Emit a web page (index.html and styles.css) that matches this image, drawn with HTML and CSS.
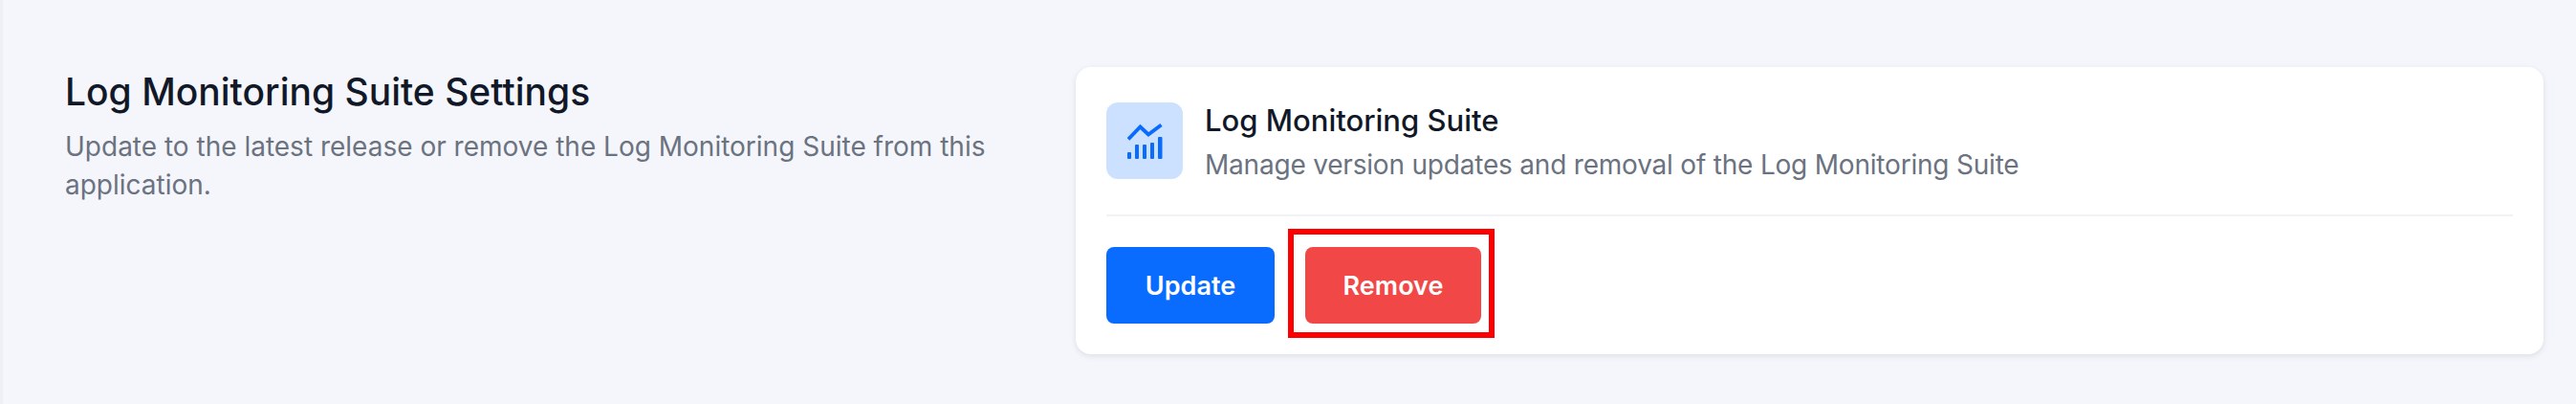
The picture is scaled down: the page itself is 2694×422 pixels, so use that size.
FILE: index.html
```html
<!DOCTYPE html>
<html lang="en">
<head>
  <meta charset="UTF-8" />
  <title>Log Monitoring Suite Settings</title>
  <link rel="stylesheet" href="styles.css">
</head>
<body>
  <div class="page">
    <div class="intro">
      <h2>Log Monitoring Suite Settings</h2>
      <p>Update to the latest release or remove the Log Monitoring Suite from this application.</p>
    </div>

    <div class="card">
      <div class="card-head">
        <div class="icon-box">
          <svg width="37" height="37" viewBox="0 0 37 37" fill="none">
            <path d="M1 16.5 L13.5 3.5 L22 11.5 L35.5 1.5" stroke="#0a6cff" stroke-width="3.8"/>
            <g fill="#0a6cff">
              <rect x="0" y="30" width="4" height="7" rx="1"/>
              <rect x="8" y="22" width="4" height="15" rx="1"/>
              <rect x="16" y="22" width="4" height="15" rx="1"/>
              <rect x="24" y="20" width="4" height="17" rx="1"/>
              <rect x="32" y="14" width="4.5" height="23" rx="1"/>
            </g>
          </svg>
        </div>
        <div class="card-text">
          <h3>Log Monitoring Suite</h3>
          <p>Manage version updates and removal of the Log Monitoring Suite</p>
        </div>
      </div>
      <div class="row">
        <button class="update">Update</button>
        <div class="marked">
          <button class="remove">Remove</button>
        </div>
      </div>
    </div>
  </div>
</body>
</html>
```

FILE: styles.css
```css
html, body { margin: 0; height: 100%; }
body { font-family: Inter, "Open Sans", sans-serif; background: #f5f6fb; }
.page { display: flex; height: 422px; box-sizing: border-box; padding: 70px 34px 52px 65px; border-left: 3px solid #eef0f5; }
.intro { width: 1057px; flex: none; box-sizing: border-box; padding: 2px 60px 0 0; }
.intro h2 { margin: 0; font-size: 39px; line-height: 48px; font-weight: 500; color: #111827; }
.intro p { margin: 13px 0 0; font-size: 28px; line-height: 40px; color: #6b7280; }
.card { flex: 1; box-sizing: border-box; padding: 37px 32px 32px; background: #fff; border-radius: 16px; box-shadow: 0 2px 6px rgba(17, 24, 39, 0.1); }
.card-head { display: flex; gap: 24px; padding-bottom: 37px; border-bottom: 2px solid #f1f2f4; }
.icon-box { width: 80px; height: 80px; flex: none; display: flex; align-items: center; justify-content: center; background: #cce1ff; border-radius: 12px; }
.card-text { margin-left: -1px; }
.card-text h3 { margin: 0; font-size: 31px; line-height: 38px; font-weight: 500; color: #111827; }
.card-text p { margin: 13px 0 0; font-size: 28px; line-height: 29px; letter-spacing: -0.2px; color: #6b7280; }
.row { display: flex; gap: 32px; margin-top: 32px; }
button { height: 80px; border: none; border-radius: 8px; color: #fff; font-family: inherit; font-size: 27px; font-weight: 600; cursor: pointer; }
.update { width: 176px; background: #0a6cff; }
.remove { width: 184px; background: #f24747; display: block; }
.marked { position: relative; }
.marked::after { content: ""; position: absolute; top: -19px; right: -14px; bottom: -15px; left: -18px; border: 6px solid #ff0000; pointer-events: none; }
```
